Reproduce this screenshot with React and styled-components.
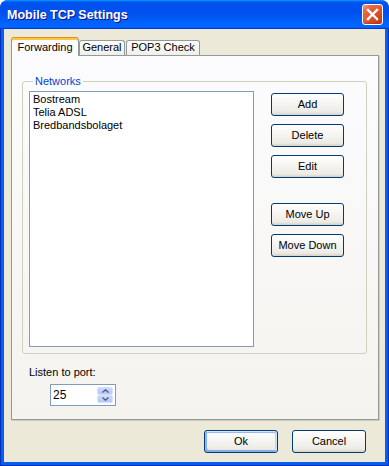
import React from "react";
import styled, { createGlobalStyle, css } from "styled-components";

const GlobalStyle = createGlobalStyle`
  html, body {
    margin: 0;
    padding: 0;
    background: #ffffff;
  }
  body {
    font-family: "Liberation Sans", Arial, sans-serif;
    font-size: 11px;
    color: #000;
  }
`;

const networks = ["Bostream", "Telia ADSL", "Bredbandsbolaget"];

const tabs = [
  { label: "Forwarding", width: 68, active: true },
  { label: "General", width: 46 },
  { label: "POP3 Check", width: 74 },
];

const App = () => {
  return (
    <>
      <GlobalStyle />
      <Window>
        <TitleBar>
          <Title>Mobile TCP Settings</Title>
          <CloseButton aria-label="Close">
            <svg width="13" height="13" viewBox="0 0 13 13">
              <path
                d="M2 2 L11 11 M11 2 L2 11"
                stroke="#ffffff"
                strokeWidth="2.4"
                strokeLinecap="square"
              />
            </svg>
          </CloseButton>
        </TitleBar>
        <Frame>
          <Client>
            <TabRow>
              {tabs.map((t) => (
                <Tab key={t.label} $active={t.active} $w={t.width}>
                  {t.label}
                </Tab>
              ))}
            </TabRow>
            <Panel>
              <GroupBox>
                <Legend>Networks</Legend>
                <GroupBody>
                  <ListBox>
                    {networks.map((n) => (
                      <ListItem key={n}>{n}</ListItem>
                    ))}
                  </ListBox>
                  <ButtonColumn>
                    <Button>Add</Button>
                    <Button>Delete</Button>
                    <Button>Edit</Button>
                    <Button $gapBefore>Move Up</Button>
                    <Button>Move Down</Button>
                  </ButtonColumn>
                </GroupBody>
              </GroupBox>
              <PortLabel>Listen to port:</PortLabel>
              <Spinner>
                <SpinValue>25</SpinValue>
                <SpinButtons>
                  <SpinButton>
                    <svg width="7" height="4" viewBox="0 0 7 4">
                      <path d="M0.5 3.5 L3.5 0.8 L6.5 3.5" fill="none" stroke="#4d6185" strokeWidth="1.4" />
                    </svg>
                  </SpinButton>
                  <SpinButton>
                    <svg width="7" height="4" viewBox="0 0 7 4">
                      <path d="M0.5 0.5 L3.5 3.2 L6.5 0.5" fill="none" stroke="#4d6185" strokeWidth="1.4" />
                    </svg>
                  </SpinButton>
                </SpinButtons>
              </Spinner>
            </Panel>
            <Footer>
              <Button $default $w={74}>Ok</Button>
              <Button $w={74}>Cancel</Button>
            </Footer>
          </Client>
        </Frame>
      </Window>
    </>
  );
};

export default App;

const Window = styled.div`
  width: 389px;
  height: 466px;
  display: flex;
  flex-direction: column;
  background: #0a5ced;
  border-radius: 8px 8px 0 0;
  overflow: hidden;
`;

const TitleBar = styled.div`
  height: 29px;
  flex: none;
  display: flex;
  align-items: center;
  justify-content: space-between;
  padding: 0 6px 0 7px;
  box-sizing: border-box;
  background: linear-gradient(
    180deg,
    #0997ff,
    #0053ee 8%,
    #0050ee 40%,
    #0066ff 88%,
    #0066ff 93%,
    #005bff 95%,
    #003dd7 96%,
    #003dd7
  );
`;

const Title = styled.div`
  font: bold 12.5px/14px "Liberation Sans", Arial, sans-serif;
  color: #ffffff;
  text-shadow: 1px 1px #0f1089;
  padding-top: 1px;
`;

const CloseButton = styled.div`
  width: 21px;
  height: 21px;
  box-sizing: border-box;
  display: flex;
  align-items: center;
  justify-content: center;
  border: 1px solid #ffffff;
  border-radius: 3px;
  background: radial-gradient(
    circle at 85% 85%,
    #c8400f 0%,
    #e05530 50%,
    #e8704e 78%,
    #f5a88a 100%
  );
  box-shadow: inset 0 -1px 2px rgba(150, 30, 0, 0.5);
`;

const Frame = styled.div`
  flex: 1;
  display: flex;
  padding: 0 4px 4px;
  background: #0a5ced;
  box-shadow: inset 1px 0 #0032c0, inset -1px 0 #0032c0, inset 0 -1px #0032c0;
`;

const Client = styled.div`
  flex: 1;
  display: flex;
  flex-direction: column;
  background: #ece9d8;
  padding: 8px 6px 0 7px;
`;

const TabRow = styled.div`
  display: flex;
  align-items: flex-end;
  height: 18px;
  position: relative;
  z-index: 1;
`;

const Tab = styled.div`
  width: ${(p) => p.$w}px;
  box-sizing: border-box;
  text-align: center;
  line-height: 13px;
  border: 1px solid #919b9c;
  border-bottom: none;
  border-radius: 3px 3px 0 0;
  height: 15px;
  margin-right: 1px;
  background: linear-gradient(180deg, #ffffff, #fafaf9 26%, #f0f0ea 95%, #ecebe5);
  ${(p) =>
    p.$active &&
    css`
      height: 19px;
      margin-bottom: -1px;
      margin-right: 0;
      padding-top: 3px;
      background: #fcfcfe;
      border-top-color: #e68b2c;
      box-shadow: inset 0 2px #ffc83c;
    `}
`;

const Panel = styled.div`
  flex: 1;
  display: flex;
  flex-direction: column;
  align-items: flex-start;
  border: 1px solid #919b9c;
  background: linear-gradient(180deg, #fcfcfe, #f4f3ee);
  padding: 19px 11px 0 10px;
  box-shadow: 1px 1px 0 #d0cebf;
`;

const GroupBox = styled.fieldset`
  margin: 0;
  align-self: stretch;
  min-width: 0;
  border: 1px solid #d0d0bf;
  border-radius: 3px;
  padding: 3px 22px 6px 6px;
`;

const Legend = styled.legend`
  margin-left: 4px;
  padding: 0 2px;
  line-height: 13px;
  color: #0046d5;
`;

const GroupBody = styled.div`
  display: flex;
  gap: 17px;
`;

const ListBox = styled.div`
  width: 225px;
  height: 256px;
  box-sizing: border-box;
  background: #ffffff;
  border: 1px solid #7f9db9;
  padding: 1px 3px;
`;

const ListItem = styled.div`
  line-height: 13px;
  white-space: nowrap;
`;

const ButtonColumn = styled.div`
  width: 73px;
  display: flex;
  flex-direction: column;
  gap: 8px;
  padding-top: 2px;
`;

const Button = styled.div`
  height: 23px;
  width: ${(p) => (p.$w ? `${p.$w}px` : "auto")};
  box-sizing: border-box;
  display: flex;
  align-items: center;
  justify-content: center;
  border: 1px solid #003c74;
  border-radius: 3px;
  background: linear-gradient(180deg, #ffffff, #ecebe6 86%, #d6d0c5);
  line-height: 13px;
  ${(p) =>
    p.$gapBefore &&
    css`
      margin-top: 17px;
    `}
  ${(p) =>
    p.$default &&
    css`
      box-shadow: inset -1px 1px #cee7ff, inset 1px 2px #98b8ea,
        inset -2px 2px #bcd4f6, inset 1px -1px #89ade4, inset 2px -2px #89ade4;
    `}
`;

const PortLabel = styled.div`
  margin: 12px 0 0 7px;
  line-height: 13px;
`;

const Spinner = styled.div`
  margin: 5px 0 0 28px;
  width: 66px;
  height: 22px;
  box-sizing: border-box;
  border: 1px solid #7f9db9;
  background: #ffffff;
  display: flex;
  align-items: center;
  justify-content: space-between;
  padding: 0 2px 0 2px;
`;

const SpinValue = styled.span`
  line-height: 13px;
  font-size: 12px;
  padding-top: 1px;
`;

const SpinButtons = styled.div`
  display: flex;
  flex-direction: column;
  width: 16px;
`;

const SpinButton = styled.div`
  height: 8px;
  display: flex;
  align-items: center;
  justify-content: center;
  box-sizing: border-box;
  border: 1px solid #d5e0fb;
  border-radius: 2px;
  background: linear-gradient(180deg, #cdd9fb, #b4c7f6);
`;

const Footer = styled.div`
  display: flex;
  justify-content: flex-end;
  gap: 14px;
  padding: 10px 13px 9px 0;
`;
